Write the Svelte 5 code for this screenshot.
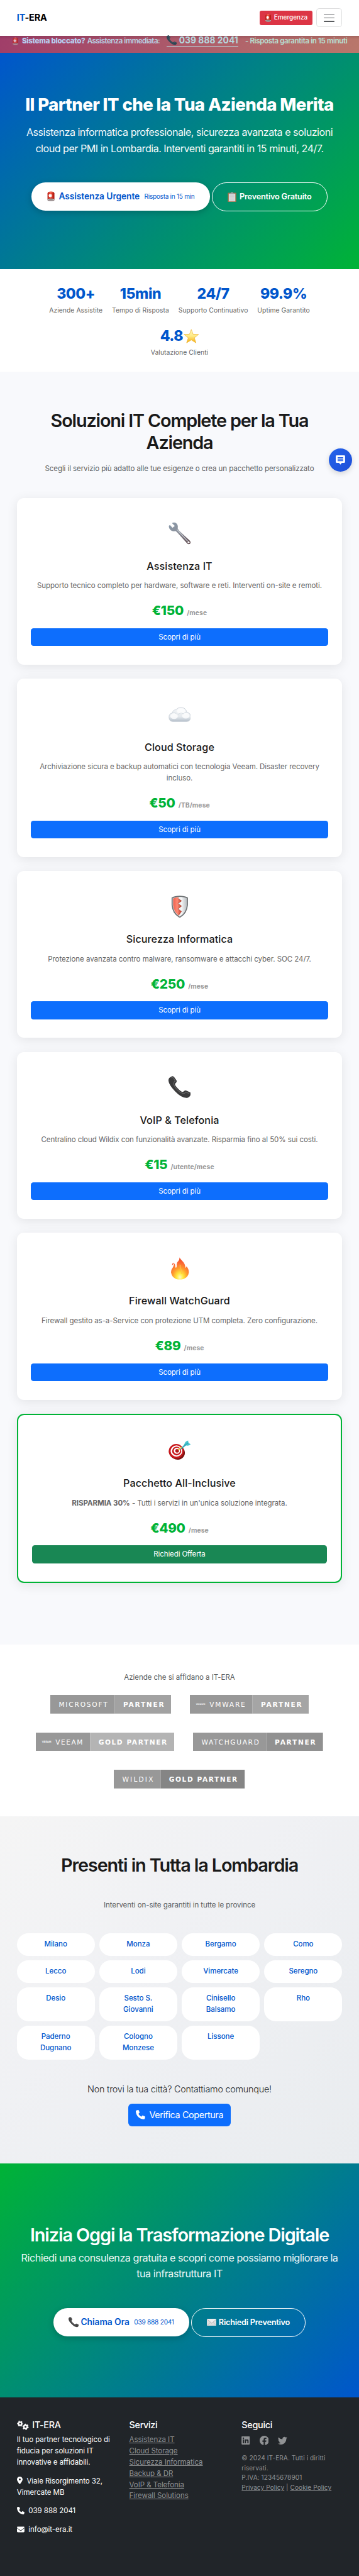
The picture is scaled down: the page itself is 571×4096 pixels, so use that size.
<script>
  const stats = [
    { value: '300+', label: 'Aziende Assistite' },
    { value: '15min', label: 'Tempo di Risposta' },
    { value: '24/7', label: 'Supporto Continuativo' },
    { value: '99.9%', label: 'Uptime Garantito' },
    { value: '4.8', label: 'Valutazione Clienti', star: true }
  ];

  const services = [
    { icon: 'wrench', name: 'Assistenza IT', lines: ['Supporto tecnico completo per hardware, software e reti. Interventi on-site e remoti.'], price: '€150', unit: '/mese' },
    { icon: 'cloud', name: 'Cloud Storage', lines: ['Archiviazione sicura e backup automatici con tecnologia Veeam. Disaster recovery', 'incluso.'], price: '€50', unit: '/TB/mese' },
    { icon: 'shield', name: 'Sicurezza Informatica', lines: ['Protezione avanzata contro malware, ransomware e attacchi cyber. SOC 24/7.'], price: '€250', unit: '/mese' },
    { icon: 'phone', name: 'VoIP & Telefonia', lines: ['Centralino cloud Wildix con funzionalità avanzate. Risparmia fino al 50% sui costi.'], price: '€15', unit: '/utente/mese' },
    { icon: 'fire', name: 'Firewall WatchGuard', lines: ['Firewall gestito as-a-Service con protezione UTM completa. Zero configurazione.'], price: '€89', unit: '/mese' },
    { icon: 'target', name: 'Pacchetto All-Inclusive', strong: 'RISPARMIA 30%', lines: ["- Tutti i servizi in un'unica soluzione integrata."], price: '€490', unit: '/mese', featured: true }
  ];

  const partnerRows = [
    [
      { name: 'MICROSOFT', nw: 138, nx: 18, nl: 103, level: 'PARTNER', lw: 121, tone: '#a2a2a2', tl: 86 },
      { name: 'VMWARE', logo: 'vmware', nw: 134, nx: 42, nl: 75, level: 'PARTNER', lw: 121, tone: '#a5a5a5', tl: 86 }
    ],
    [
      { name: 'VEEAM', logo: 'VEEAM', nw: 116, nx: 42, nl: 57, level: 'GOLD PARTNER', lw: 180, tone: '#b4b4b4', tl: 145 },
      { name: 'WATCHGUARD', nw: 157, nx: 18, nl: 122, level: 'PARTNER', lw: 121, tone: '#919191', tl: 86 }
    ],
    [{ name: 'WILDIX', nw: 100, nx: 18, nl: 65, level: 'GOLD PARTNER', lw: 180, tone: '#858585', tl: 145 }]
  ];

  const cities = [
    ['Milano'], ['Monza'], ['Bergamo'], ['Como'],
    ['Lecco'], ['Lodi'], ['Vimercate'], ['Seregno'],
    ['Desio'], ['Sesto S.', 'Giovanni'], ['Cinisello', 'Balsamo'], ['Rho'],
    ['Paderno', 'Dugnano'], ['Cologno', 'Monzese'], ['Lissone']
  ];

  const links = ['Assistenza IT', 'Cloud Storage', 'Sicurezza Informatica', 'Backup & DR', 'VoIP & Telefonia', 'Firewall Solutions'];
  const phonePath = 'M164.9 24.6c-7.7-18.6-28-28.5-47.4-23.2l-88 24C12.1 30.2 0 46 0 64C0 311.4 200.6 512 448 512c18 0 33.8-12.1 38.6-29.5l24-88c5.3-19.4-4.6-39.7-23.2-47.4l-96-40c-16.3-6.8-35.2-2.1-46.3 11.6L304.7 368C234.3 334.7 177.3 277.7 144 207.3L193.3 167c13.7-11.2 18.4-30 11.6-46.3l-40-96z';
</script>

{#snippet siren(w, h)}
  <svg class="glyph" width={w} height={h} viewBox="0 0 18 21" preserveAspectRatio="none">
    <defs>
      <linearGradient id="dome" x1="0" x2="1"><stop offset="0" stop-color="#b5190f" /><stop offset=".45" stop-color="#f4503c" /><stop offset="1" stop-color="#a8140c" /></linearGradient>
    </defs>
    <path d="M2 16V4.500Q2.500 .6 9 .6T16 4.500V16Z" fill="url(#dome)" />
    <path d="M4.500 2.200Q9 -.2 13.500 2.200Q9 1.600 4.500 2.200Z" fill="#ffb0a2" />
    <path d="M7.500 4.500l1 2.300 2.400-1-1 2.300 2.300.8-2.300 1 1 2.200-2.400-.9-1 2.400-.9-2.400-2.300.9 1-2.200-2.300-1 2.300-.8-1-2.300 2.300 1Z" fill="#fff" />
    <path d="M1.800 15.600Q9 13.800 16.200 15.600V18.200Q14.500 20.400 9 20.400T1.800 18.200Z" fill="#8b7f80" />
    <path d="M2.200 16.200Q9 19.400 15.800 16.200V17.300Q9 20 2.200 17.300Z" fill="#d6cdcc" />
  </svg>
{/snippet}

{#snippet handset(w, h, tint)}
  <svg class="glyph" width={w} height={h} viewBox="0 0 48 46" preserveAspectRatio="none">
    <path d="M5 1.500Q9-1 12 2L17 9Q18.500 11.500 16 14L14 16Q13 19 20 26T29.500 33Q31 33.600 34 31Q36 29.500 38.500 30.500L46 34Q49 36 47 40T41 45.500Q29 47.500 14 32T0 8Q.5 3.500 5 1.500Z" fill={tint} />
    <path d="M6 4Q9 2 11 5L14.500 10.500Q11 12 11 17Q13 23 19 29T31 36.500Q35 36.500 37 33.500L44 36.500" fill="none" stroke="#8a8a8a" stroke-opacity=".55" stroke-width="1.500" />
  </svg>
{/snippet}

{#snippet emblem(kind)}
  <svg width="48" height="48" viewBox="0 0 48 48">
    {#if kind === 'wrench'}
      <defs><linearGradient id="steel" x1="0" y1="0" x2="1" y2="1"><stop offset="0" stop-color="#8a9bab" /><stop offset=".45" stop-color="#8b8f99" /><stop offset="1" stop-color="#5a4247" /></linearGradient></defs>
      <path d="M8 2Q14-.5 18 4Q21 8 19.500 13.500Q21 17 25 21L45 39.500Q49 44 46 46.500Q43 49 39.500 45.500L20 24Q17 20 14.500 19Q9 21 4.500 17.500Q0 13.500 1 8L3 6.500L8.500 12.500L13.500 8.500L8 3Z" fill="url(#steel)" />
      <path d="M18 16L41 41" stroke="#c3ccd3" stroke-width="1.600" />
      <circle cx="43" cy="43.500" r="2" fill="#fff" />
    {:else if kind === 'cloud'}
      <defs><linearGradient id="mist" x1="0" y1="0" x2="0" y2="1"><stop offset="0" stop-color="#f4f6f8" /><stop offset=".65" stop-color="#e6eaee" /><stop offset="1" stop-color="#b4bfca" /></linearGradient></defs>
      <path d="M9 39.500Q1 39 1 30Q1 22 8.500 21Q9 14.500 16 14Q20 9 27 9.200Q37 9.500 39 19Q47.500 21 47.500 29.500Q47 39 39 39.500Z" fill="url(#mist)" stroke="#b9c3cc" stroke-width=".8" />
      <ellipse cx="27" cy="17" rx="9" ry="6" fill="#fff" opacity=".75" />
      <ellipse cx="12" cy="28" rx="8" ry="6" fill="#fff" opacity=".75" />
      <ellipse cx="37" cy="27" rx="8" ry="6" fill="#fff" opacity=".75" />
      <path d="M9 21Q14 19 17 23M20 25Q26 19 32 23Q34 20 39 19.500" fill="none" stroke="#cfd6dd" />
    {:else if kind === 'shield'}
      <defs>
        <linearGradient id="silver" x1="0" x2="1"><stop offset="0" stop-color="#bfc4c8" /><stop offset=".6" stop-color="#f6f7f8" /><stop offset="1" stop-color="#b3b8bc" /></linearGradient>
        <linearGradient id="ruby" x1="0" x2="1"><stop offset="0" stop-color="#f0604c" /><stop offset=".5" stop-color="#ff8a75" /><stop offset="1" stop-color="#b83c28" /></linearGradient>
      </defs>
      <path d="M24 1.500Q34 1.500 40.500 5V20Q39 38 24 46.500Q9 38 7.700 20V5Q14 1.500 24 1.500Z" fill="url(#silver)" stroke="#6f7375" stroke-width="2.200" />
      <path d="M23 3.500Q15 3.600 10 6.300V20Q11 35 22 43L27.500 34L20 28.500L28 22.500L20 17L28 11.500L20 6Z" fill="url(#ruby)" />
      <path d="M20 6L28 11.500L20 17L28 22.500L20 28.500L28 34L22 41" fill="none" stroke="#a83a2a" stroke-width="1" />
    {:else if kind === 'phone'}
      {@render handset(48, 47, '#3b3b3c')}
    {:else if kind === 'fire'}
      <defs><radialGradient id="blaze" cx=".5" cy=".9" r=".85"><stop offset="0" stop-color="#fffbc4" /><stop offset=".22" stop-color="#ffe93c" /><stop offset=".48" stop-color="#ff9f2c" /><stop offset=".75" stop-color="#fb6a34" /><stop offset="1" stop-color="#f04a23" /></radialGradient></defs>
      <path d="M23.500.5Q25 4 29.500 8Q36 14 36 22.500Q38 23 38.500 19.500Q44 26 43.500 33Q42 44 31 47Q24 48.500 17 47Q7 43 5.500 33Q5 27 9.500 21.500Q12.500 17 11.500 12Q14.500 15 14.500 20Q14.500 24 17 22Q18 18 17.500 15Q17.500 11 21 8.500Q24 5 23.500.5Z" fill="url(#blaze)" />
      <path d="M7.500 17.500Q7.500 13.500 11 11.500Q11.500 15 7.500 17.500Z" fill="#f04a23" />
      <path d="M25 16Q24 22 27 27Q30 31 28 36" fill="none" stroke="#ffc24a" stroke-width="2.500" opacity=".7" />
    {:else}
      <ellipse cx="18" cy="27" rx="17.500" ry="15.500" fill="#7d1414" transform="rotate(30 18 27)" />
      <ellipse cx="16.500" cy="25" rx="16" ry="15.500" fill="#c8181c" />
      <ellipse cx="17" cy="24.500" rx="12.500" ry="12" fill="#fff" />
      <ellipse cx="17.500" cy="24.500" rx="9.700" ry="9.300" fill="#c8181c" />
      <ellipse cx="18" cy="24" rx="6.800" ry="6.500" fill="#fff" />
      <ellipse cx="18.500" cy="24" rx="4" ry="3.900" fill="#b3171a" />
      <path d="M20 22.500L28 16" stroke="#e5b63a" stroke-width="2.500" />
      <path d="M25 21.500L35 9L38 12L27.500 20.500Z" fill="#2ea9b8" />
      <path d="M34 10Q35 4 42 2L42.500 7L47.500 10Q43 14.500 37 12.500Z" fill="#46c3cf" />
      <path d="M35 12L43 6.500" stroke="#1e8a98" stroke-width="1" />
    {/if}
  </svg>
{/snippet}

<div class="page">
  <header>
    <div class="brand"><span>IT</span>-ERA</div>
    <div class="tools">
      <button class="sos">{@render siren(15, 18)}<span>Emergenza</span></button>
      <button class="burger" aria-label="Menu"><i></i><i></i><i></i></button>
    </div>
  </header>

  <div class="alert">
    <span class="a-icon">{@render siren(15, 18)}</span>
    <strong>Sistema bloccato?</strong>
    <span class="a-mid">Assistenza immediata:</span>
    <span class="a-slot"><a class="a-tel">{@render handset(22, 21, '#2c4453')}<span>039 888 2041</span></a></span>
    <span class="a-end">- Risposta garantita in 15 minuti</span>
  </div>

  <section class="hero">
    <h1>Il Partner IT che la Tua Azienda Merita</h1>
    <p>Assistenza informatica professionale, sicurezza avanzata e soluzioni<br />cloud per PMI in Lombardia. Interventi garantiti in 15 minuti, 24/7.</p>
    <div class="cta-row">
      <a class="pill-solid w382">{@render siren(19, 22)}<b>Assistenza Urgente</b><small>Risposta in 15 min</small></a>
      <a class="pill-line w248">
        <svg class="glyph clip" width="19" height="22" viewBox="0 0 19 22">
          <rect x=".5" y="2" width="18" height="20" rx="1" fill="#a0714a" />
          <rect x="2.500" y="4" width="14" height="16.500" fill="#d9dcdd" />
          <path d="M4.500 7.500H14.500M4.500 10H14.500M4.500 12.500H14.500M4.500 15H14.500M4.500 17.500H14.500" stroke="#bfc3c5" stroke-width=".8" />
          <path d="M4.500 5V3H7Q7.500.3 9.500.3T12 3H14.500V5Z" fill="#9aa0a3" />
        </svg>
        <b class="mid">Preventivo Gratuito</b>
      </a>
    </div>
  </section>

  <section class="stats">
    {#each stats as s}
      <div class="stat">
        <div class="num">{s.value}{#if s.star}<svg width="33" height="31" viewBox="0 0 33 31">
            <defs><linearGradient id="gold" x1="0" y1="0" x2="0" y2="1"><stop offset="0" stop-color="#fff8c0" /><stop offset=".5" stop-color="#ffeb85" /><stop offset="1" stop-color="#f5a90c" /></linearGradient></defs>
            <path d="M16.500 1.200L20.300 11.300L32 11.800L23 19L26.500 29.800L16.500 23.600L6.500 29.800L10 19L1 11.800L12.700 11.300Z" fill="url(#gold)" stroke="#efb52c" stroke-width="1" stroke-linejoin="round" />
          </svg>{/if}</div>
        <div class="lab">{s.label}</div>
      </div>
    {/each}
  </section>

  <section class="services">
    <h2>Soluzioni IT Complete per la Tua<br />Azienda</h2>
    <p class="sub">Scegli il servizio più adatto alle tue esigenze o crea un pacchetto personalizzato</p>
    <div class="cards">
      {#each services as s}
        <article class:featured={s.featured}>
          <div class="emblem">{@render emblem(s.icon)}</div>
          <h3>{s.name}</h3>
          <div class="desc">
            {#each s.lines as line}<div>{#if s.strong}<strong>{s.strong}</strong>{' '}{/if}{line}</div>{/each}
          </div>
          <div class="price"><b>{s.price}</b><span>{s.unit}</span></div>
          <a class="more">{s.featured ? 'Richiedi Offerta' : 'Scopri di più'}</a>
        </article>
      {/each}
    </div>
    <button class="chat" aria-label="Chat">
      <svg width="20" height="20" viewBox="0 0 20 20">
        <path d="M2 0H18Q20 0 20 2V14Q20 16 18 16H13L10 20L7 16H2Q0 16 0 14V2Q0 0 2 0Z" fill="#fff" />
        <path d="M4 5H16M4 8.200H16M4 11.400H16" stroke="#2159e3" stroke-width="1.900" />
      </svg>
    </button>
  </section>

  <section class="partners">
    <p class="sub">Aziende che si affidano a IT-ERA</p>
    {#each partnerRows as row}
      <div class="badge-row">
        {#each row as b}
          <svg width={b.nw + b.lw} height="40">
            <rect width={b.nw} height="40" fill="#989898" />
            <rect x={b.nw} width={b.lw} height="40" fill={b.tone} />
            {#if b.logo}<text class="tiny" x="13" y="22" textLength="20" lengthAdjust="spacingAndGlyphs">{b.logo}</text>{/if}
            <text class="bn" x={b.nx} y="25.300" textLength={b.nl + 1}>{b.name}</text>
            <text class="bl" x={b.nw + 18} y="25.300" textLength={b.tl + 1}>{b.level}</text>
          </svg>
        {/each}
      </div>
    {/each}
  </section>

  <section class="coverage">
    <h2>Presenti in Tutta la Lombardia</h2>
    <p class="sub">Interventi on-site garantiti in tutte le province</p>
    <div class="cities">
      {#each cities as c}
        <div class="city">{#each c as line}<div>{line}</div>{/each}</div>
      {/each}
    </div>
    <p class="lead">Non trovi la tua città? Contattiamo comunque!</p>
    <a class="verify"><svg width="20" height="20" viewBox="0 0 512 512"><path d={phonePath} fill="#fff" /></svg>Verifica Copertura</a>
  </section>

  <section class="final">
    <h2>Inizia Oggi la Trasformazione Digitale</h2>
    <p>Richiedi una consulenza gratuita e scopri come possiamo migliorare la<br />tua infrastruttura IT</p>
    <div class="cta-row">
      <a class="pill-solid w290">{@render handset(22, 22, '#444')}<b class="tel">Chiama Ora</b><small class="num-small">039 888 2041</small></a>
      <a class="pill-line w245">
        <svg class="glyph" width="21" height="15" viewBox="0 0 21 15">
          <rect width="21" height="15" rx="1" fill="#dedede" />
          <path d="M.5 14.500L8 7.500M20.500 14.500L13 7.500" stroke="#b5b5b5" />
          <path d="M.5.800L10.500 9.500L20.500.800" fill="#efefef" stroke="#a9a9a9" />
        </svg>
        <b class="mid rp">Richiedi Preventivo</b>
      </a>
    </div>
  </section>

  <footer>
    <div class="fcol">
      <h4>
        <svg width="26" height="20" viewBox="0 0 26 20" fill="none" stroke="#fff">
          <circle cx="6.700" cy="6.500" r="3.400" stroke-width="3" />
          <circle cx="6.700" cy="6.500" r="5.400" stroke-width="2" stroke-dasharray="2.830 2.830" stroke-dashoffset="1.400" />
          <circle cx="18.300" cy="13.200" r="3.600" stroke-width="3" />
          <circle cx="18.300" cy="13.200" r="5.600" stroke-width="2.200" stroke-dasharray="2.930 2.930" />
        </svg>IT-ERA
      </h4>
      <p>Il tuo partner tecnologico di<br />fiducia per soluzioni IT<br />innovative e affidabili.</p>
      <p><svg width="12" height="16" viewBox="0 0 384 512"><path d="M215.700 499.200C267 435 384 279.400 384 192C384 86 298 0 192 0S0 86 0 192c0 87.400 117 243 168.300 307.200c12.300 15.300 35.100 15.300 47.400 0zM192 128a64 64 0 1 1 0 128 64 64 0 1 1 0-128z" fill="#fff" /></svg>Viale Risorgimento 32,<br />Vimercate MB</p>
      <p><svg width="16" height="16" viewBox="0 0 512 512"><path d={phonePath} fill="#fff" /></svg>039 888 2041</p>
      <p><svg width="16" height="16" viewBox="0 0 512 512"><path d="M48 64C21.500 64 0 85.500 0 112c0 15.100 7.100 29.300 19.200 38.400L236.800 313.600c11.400 8.500 27 8.500 38.400 0L492.800 150.400c12.100-9.100 19.200-23.300 19.200-38.400c0-26.500-21.500-48-48-48H48zM0 176V384c0 35.300 28.700 64 64 64H448c35.300 0 64-28.700 64-64V176L294.400 339.200c-22.800 17.100-54 17.100-76.800 0L0 176z" fill="#fff" /></svg>info@it-era.it</p>
    </div>
    <div class="fcol">
      <h4>Servizi</h4>
      {#each links as l}<a class="flink">{l}</a>{/each}
    </div>
    <div class="fcol">
      <h4>Seguici</h4>
      <div class="social">
        <svg width="18" height="20" viewBox="0 0 448 512"><path d="M416 32H31.900C14.300 32 0 46.500 0 64.300v383.400C0 465.500 14.300 480 31.900 480H416c17.600 0 32-14.500 32-32.300V64.300c0-17.800-14.400-32.300-32-32.300zM135.400 416H69V202.200h66.500V416zm-33.200-243c-21.300 0-38.500-17.300-38.500-38.500S80.900 96 102.200 96c21.200 0 38.500 17.300 38.500 38.500 0 21.300-17.200 38.500-38.500 38.500zm282.100 243h-66.400V312c0-24.800-.5-56.700-34.500-56.700-34.600 0-39.900 27-39.900 54.900V416h-66.400V202.200h63.700v29.200h.9c8.900-16.800 30.600-34.500 62.900-34.500 67.200 0 79.700 44.300 79.700 101.900V416z" /></svg>
        <svg width="20" height="20" viewBox="0 0 16 16"><path d="M16 8.049c0-4.446-3.582-8.050-8-8.050C3.580 0 0 3.603 0 8.050c0 4.017 2.926 7.347 6.750 7.951v-5.625H4.720V8.050H6.750V6.275c0-2.017 1.195-3.131 3.022-3.131.876 0 1.791.157 1.791.157v1.980h-1.009c-.993 0-1.303.621-1.303 1.258v1.510h2.218l-.354 2.326H9.250V16C13.074 15.396 16 12.066 16 8.049" /></svg>
        <svg width="20" height="20" viewBox="0 0 16 16"><path d="M5.026 15c6.038 0 9.341-5.003 9.341-9.334q.002-.211-.006-.422A6.700 6.700 0 0 0 16 3.542a6.700 6.700 0 0 1-1.889.518 3.300 3.300 0 0 0 1.447-1.817 6.500 6.500 0 0 1-2.087.793A3.286 3.286 0 0 0 7.875 6.030a9.320 9.320 0 0 1-6.767-3.429 3.290 3.290 0 0 0 1.018 4.382A3.300 3.300 0 0 1 .64 6.575v.045a3.290 3.290 0 0 0 2.632 3.218 3.200 3.200 0 0 1-.865.115 3 3 0 0 1-.614-.057 3.280 3.280 0 0 0 3.067 2.277A6.600 6.600 0 0 1 .78 13.580a6 6 0 0 1-.78-.045A9.340 9.340 0 0 0 5.026 15" /></svg>
      </div>
      <div class="legal">© 2024 IT-ERA. Tutti i diritti<br />riservati.<br />P.IVA: 12345678901<br /><u>Privacy Policy</u> | <u>Cookie Policy</u></div>
    </div>
  </footer>
</div>

<style>
  :global(html), :global(body) { margin: 0; overflow: hidden; background: #fff; }
  .page, .page * { box-sizing: border-box; }
  .page {
    width: 768px; height: 5509px; overflow: hidden; zoom: 0.74349;
    font-family: Inter, "Liberation Sans", sans-serif; font-size: 15.52px; line-height: 24px;
    color: #212529; white-space: nowrap;
  }
  h1, h2, h3, h4, p { margin: 0; }
  button { font: inherit; padding: 0; }
  svg { flex: none; }

  header { height: 76px; padding: 0 36px; display: flex; align-items: center; justify-content: space-between; background: #fff; }
  .brand { font-weight: 700; font-size: 19.4px; letter-spacing: -.15px; color: #000; padding-bottom: 1px; }
  .brand span { color: #0056cc; }
  .tools { display: flex; align-items: center; gap: 8px; }
  .sos { width: 112px; height: 31px; border: 0; border-radius: 4px; background: #dc3545; color: #fff; display: flex; align-items: center; justify-content: center; gap: 5px; font-weight: 500; font-size: 13.58px; letter-spacing: -.09px; }
  .burger { width: 56px; height: 40px; background: #fff; border: 1px solid #dedfe0; border-radius: 6px; display: flex; flex-direction: column; align-items: center; justify-content: center; gap: 6px; }
  .burger i { width: 24px; height: 2px; background: #585b5e; border-radius: 1px; }

  .alert { height: 37px; padding: 0 0 13px 26px; display: flex; align-items: center; background: linear-gradient(rgba(60,20,40,.18), rgba(60,20,40,0) 7px), linear-gradient(100deg, #a03e69, #b9776b); font-weight: 600; }
  .a-icon { flex: none; width: 21px; display: flex; opacity: .65; }
  .alert strong { flex: none; width: 139.500px; font-weight: 800; letter-spacing: -.36px; color: #b8cff0; }
  .a-mid { flex: none; width: 169.500px; letter-spacing: -.66px; color: #b9d3e4; }
  .a-slot { flex: none; width: 168.500px; }
  .a-tel { width: 154px; height: 24px; margin-bottom: 2px; display: flex; align-items: center; font-size: 18.62px; font-weight: 700; letter-spacing: .05px; color: #b6d8df; border-bottom: 1.500px solid #b6d8df; }
  .a-tel span { padding-left: 5px; padding-top: 2px; }
  .a-end { letter-spacing: -.49px; color: #b8e0d3; }

  .hero { height: 463px; padding-top: 87px; text-align: center; color: #fff; background: linear-gradient(135deg, #0056cc 0%, #00b336 100%); }
  h1 { font-weight: 800; font-size: 37.2px; line-height: 46px; letter-spacing: -.83px; }
  .hero p { margin-top: 21px; font-size: 21.73px; line-height: 34px; letter-spacing: -.69px; opacity: .95; }
  .cta-row { display: flex; justify-content: center; gap: 4px; }
  .hero .cta-row { margin-top: 55px; }
  .pill-solid { height: 61px; border-radius: 30px; background: #fff; color: #0056cc; display: flex; align-items: center; justify-content: center; box-shadow: 0 4px 15px rgba(0,0,0,.2); }
  .pill-line { height: 62px; border-radius: 31px; border: 2px solid #fff; color: #fff; display: flex; align-items: center; justify-content: center; }
  .w382 { width: 382px; } .w248 { width: 248px; } .w290 { width: 290px; } .w245 { width: 245px; }
  .cta-row b { font-weight: 600; font-size: 18.62px; letter-spacing: -.14px; margin-left: 7px; }
  .cta-row b.mid { font-size: 17.07px; letter-spacing: -.24px; margin-left: 6px; }
  .cta-row b.rp { letter-spacing: -.3px; margin-left: 5px; }
  .cta-row b.tel { letter-spacing: -.08px; margin-left: 4px; }
  .cta-row small { font-size: 13.58px; letter-spacing: -.39px; margin-left: 10px; }
  .cta-row small.num-small { letter-spacing: -.3px; }

  .stats { height: 219px; padding: 30px 90px 0; display: flex; flex-wrap: wrap; align-content: flex-start; justify-content: center; column-gap: 20px; text-align: center; background: #fff; }
  .stat { height: 90px; }
  .num { height: 48px; display: flex; align-items: center; justify-content: center; font-weight: 800; font-size: 31px; letter-spacing: -.6px; color: #0056cc; }
  .num svg { margin: -3px 0 0 1px; }
  .lab { height: 22px; line-height: 22px; font-size: 13.97px; letter-spacing: .05px; color: #666; }

  .services { position: relative; height: 2722px; padding: 80px 36px 0; background: #f8f9fc; }
  h2 { font-weight: 600; font-size: 38.8px; line-height: 48px; letter-spacing: -1.58px; text-align: center; color: #1a1a1a; }
  .sub { text-align: center; letter-spacing: -.11px; color: #5c5f62; }
  .services .sub { margin-top: 20px; }
  .cards { margin-top: 50px; display: flex; flex-direction: column; gap: 30px; }
  article { padding: 40px 30px; border-radius: 15px; background: #fff; box-shadow: 0 5px 25px rgba(0,0,0,.085); text-align: center; }
  article.featured { border: 3px solid #00b336; }
  .emblem { height: 72px; display: flex; align-items: center; justify-content: center; }
  h3 { margin-top: 20px; font-weight: 500; font-size: 21.73px; line-height: 29px; letter-spacing: .1px; color: #1a1a1a; }
  .desc { margin-top: 16px; letter-spacing: -.08px; color: #666; }
  .price { height: 43px; line-height: 43px; margin: 19px 0 16px; display: flex; justify-content: center; align-items: baseline; gap: 7px; }
  .price b { font-weight: 800; font-size: 27.94px; letter-spacing: -.45px; color: #00b336; }
  .price span { font-weight: 700; font-size: 13.97px; letter-spacing: .1px; color: #999; }
  .more { display: block; height: 38px; line-height: 38px; border-radius: 6px; background: #0d6efd; color: #fff; letter-spacing: -.16px; }
  .featured .more { background: #198754; }
  .chat { position: absolute; top: 164px; right: 15px; width: 50px; height: 50px; border: 0; border-radius: 50%; background: linear-gradient(135deg, #2563eb, #1d4ed8); display: flex; align-items: center; justify-content: center; box-shadow: 0 4px 12px rgba(0,0,0,.15); }

  .partners { height: 368px; padding-top: 60px; background: #fff; }
  .partners .sub { margin-bottom: 24px; letter-spacing: -.06px; }
  .badge-row { display: flex; justify-content: center; gap: 40px; margin-bottom: 40px; }
  .badge-row svg { display: block; }
  .bn, .bl { font-family: "DejaVu Sans", sans-serif; font-size: 14.3px; fill: #fff; }
  .bl { font-weight: 700; }
  .tiny { font: 700 6px "DejaVu Sans", sans-serif; fill: #eee; }

  .coverage { height: 742px; padding: 80px 36px 0; background: linear-gradient(135deg, #f5f5f5, #f0f1f4 40%, #e9ecef); text-align: center; }
  .coverage h2 { letter-spacing: -1.53px; }
  .coverage .sub { margin-top: 51px; letter-spacing: -.07px; }
  .cities { margin-top: 47px; display: grid; grid-template-columns: repeat(4, 1fr); gap: 10px; }
  .city { padding: 12px 0; border-radius: 25px; background: #fff; color: #0056cc; font-weight: 500; letter-spacing: -.07px; }
  .lead { margin-top: 48px; line-height: 30px; font-size: 19.4px; font-weight: 300; letter-spacing: -.34px; }
  .verify { margin: 16px auto 0; width: 220px; height: 48px; border-radius: 8px; background: #0d6efd; color: #fff; display: flex; align-items: center; justify-content: center; gap: 9px; font-size: 19.4px; letter-spacing: -.54px; }

  .final { height: 500px; padding-top: 129px; color: #fff; text-align: center; background: linear-gradient(135deg, #00b336 0%, #0056cc 100%); }
  .final h2 { color: #fff; letter-spacing: -1.49px; }
  .final p { margin-top: 8px; font-size: 21.73px; line-height: 34px; letter-spacing: -.63px; opacity: .93; }
  .final .cta-row { margin-top: 56px; }

  footer { height: 384px; padding: 48px 36px 0; display: grid; grid-template-columns: 240.500px 240.500px 1fr; background: #212529; color: #fff; }
  h4 { height: 24px; margin-bottom: 8px; display: flex; align-items: center; gap: 7px; font-weight: 500; font-size: 19.4px; letter-spacing: -.45px; }
  .fcol p { margin-bottom: 16px; letter-spacing: -.08px; }
  .fcol p svg { vertical-align: -2px; margin-right: 9px; }
  .flink { display: block; letter-spacing: -.08px; color: #909294; text-decoration: underline; }
  .social { height: 24px; display: flex; align-items: center; gap: 20px; fill: #909294; }
  .legal { margin-top: 16px; font-size: 13.58px; line-height: 21px; letter-spacing: .11px; color: #909294; }
</style>
